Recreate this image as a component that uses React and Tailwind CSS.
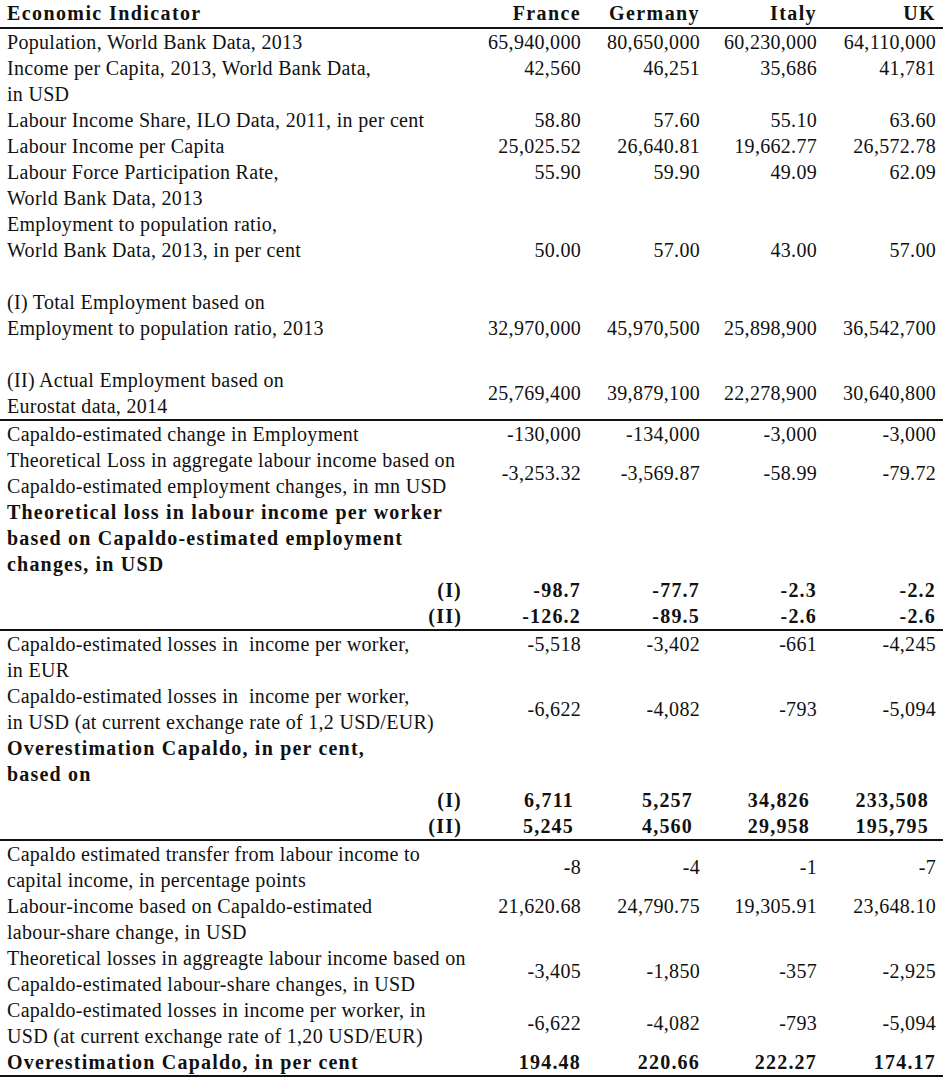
import React from 'react';

const grid = "grid grid-cols-[465px_116px_119px_117px_119px]";

const alignCls = {
    start: 'items-start',
    end: 'items-end',
    center: 'items-center',
};

const sections = [
    [
        { lines: ['Population, World Bank Data, 2013'], values: ['65,940,000', '80,650,000', '60,230,000', '64,110,000'] },
        { lines: ['Income per Capita, 2013, World Bank Data,', 'in USD'], values: ['42,560', '46,251', '35,686', '41,781'] },
        { lines: ['Labour Income Share, ILO Data, 2011, in per cent'], values: ['58.80', '57.60', '55.10', '63.60'] },
        { lines: ['Labour Income per Capita'], values: ['25,025.52', '26,640.81', '19,662.77', '26,572.78'] },
        { lines: ['Labour Force Participation Rate,', 'World Bank Data, 2013'], values: ['55.90', '59.90', '49.09', '62.09'] },
        { lines: ['Employment to population ratio,', 'World Bank Data, 2013, in per cent'], values: ['50.00', '57.00', '43.00', '57.00'], align: 'end' },
        { blank: true },
        { lines: ['(I) Total Employment based on', 'Employment to population ratio, 2013'], values: ['32,970,000', '45,970,500', '25,898,900', '36,542,700'], align: 'end' },
        { blank: true },
        { lines: ['(II) Actual Employment based on', 'Eurostat data, 2014'], values: ['25,769,400', '39,879,100', '22,278,900', '30,640,800'], align: 'center' },
    ],
    [
        { lines: ['Capaldo-estimated change in Employment'], values: ['-130,000', '-134,000', '-3,000', '-3,000'] },
        { lines: ['Theoretical Loss in aggregate labour income based on', 'Capaldo-estimated employment changes, in mn USD'], values: ['-3,253.32', '-3,569.87', '-58.99', '-79.72'], align: 'center' },
        { lines: ['Theoretical loss in labour income per worker', 'based on Capaldo-estimated employment', 'changes, in USD'], bold: true },
        { sub: '(I)', values: ['-98.7', '-77.7', '-2.3', '-2.2'], bold: true },
        { sub: '(II)', values: ['-126.2', '-89.5', '-2.6', '-2.6'], bold: true },
    ],
    [
        { lines: ['Capaldo-estimated losses in\u00a0 income per worker,', 'in EUR'], values: ['-5,518', '-3,402', '-661', '-4,245'] },
        { lines: ['Capaldo-estimated losses in\u00a0 income per worker,', 'in USD (at current exchange rate of 1,2 USD/EUR)'], values: ['-6,622', '-4,082', '-793', '-5,094'], align: 'center' },
        { lines: ['Overestimation Capaldo, in per cent,', 'based on'], bold: true },
        { sub: '(I)', values: ['6,711', '5,257', '34,826', '233,508'], bold: true, inset: true },
        { sub: '(II)', values: ['5,245', '4,560', '29,958', '195,795'], bold: true, inset: true },
    ],
    [
        { lines: ['Capaldo estimated transfer from labour income to', 'capital income, in percentage points'], values: ['-8', '-4', '-1', '-7'], align: 'center' },
        { lines: ['Labour-income based on Capaldo-estimated', 'labour-share change, in USD'], values: ['21,620.68', '24,790.75', '19,305.91', '23,648.10'] },
        { lines: ['Theoretical losses in aggreagte labour income based on', 'Capaldo-estimated labour-share changes, in USD'], values: ['-3,405', '-1,850', '-357', '-2,925'], align: 'center' },
        { lines: ['Capaldo-estimated losses in income per worker, in', 'USD (at current exchange rate of 1,20 USD/EUR)'], values: ['-6,622', '-4,082', '-793', '-5,094'], align: 'center' },
        { lines: ['Overestimation Capaldo, in per cent'], values: ['194.48', '220.66', '222.27', '174.17'], bold: true },
    ],
];

function Row({ row }) {
    if (row.blank) return <div className="h-[26px]"></div>;

    const weight = row.bold ? 'font-bold tracking-[1.2px]' : 'font-normal tracking-[0.3px]';

    return (
        <div className={grid}>
            {row.sub ? (
                <div className={`pr-[3px] text-right ${weight}`}>{row.sub}</div>
            ) : (
                <div className={`pl-[7px] ${weight}`}>
                    {row.lines.map((l) => (
                        <div key={l} className="whitespace-nowrap">{l}</div>
                    ))}
                </div>
            )}
            {(row.values || ['', '', '', '']).map((v, i) => (
                <div key={i} className={`flex justify-end ${alignCls[row.align || 'start']} ${weight} ${row.inset ? 'pr-[7px]' : ''}`}>
                    <span className="whitespace-nowrap">{v}</span>
                </div>
            ))}
        </div>
    );
}

function App() {
    return (
        <div className="w-[945px] h-[1080px] bg-white text-[#111] font-['Liberation_Serif',serif] text-[20px] leading-[26px]">
            <div className="w-[943px]">
                <div className={`${grid} font-bold tracking-[1.4px] border-b-2 border-[#111] pb-[1px]`}>
                    <div className="pl-[7px]">Economic Indicator</div>
                    <div className="text-right">France</div>
                    <div className="text-right">Germany</div>
                    <div className="text-right">Italy</div>
                    <div className="text-right">UK</div>
                </div>

                {sections.map((rows, s) => (
                    <div key={s} className="border-b-2 border-[#111]">
                        {rows.map((row, i) => (
                            <Row key={i} row={row} />
                        ))}
                    </div>
                ))}
            </div>
        </div>
    );
}

export default App
